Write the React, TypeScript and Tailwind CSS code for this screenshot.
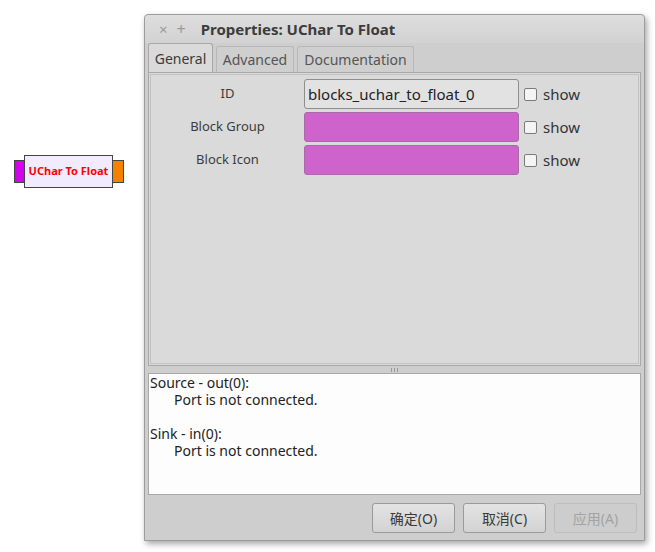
import React from 'react'

const ui = { fontFamily: '"Noto Sans", "Noto Sans CJK SC", sans-serif' }

const rows = [
  { label: 'ID', value: 'blocks_uchar_to_float_0', color: '' },
  { label: 'Block Group', value: '', color: 'magenta' },
  { label: 'Block Icon', value: '', color: 'magenta' },
]

function Row({ label, value, color }: { label: string; value: string; color: string }) {
  return (
    <div className="flex items-center h-[30px]">
      <div className="w-[153px] text-center text-[13px] text-[#3c3c3c]">{label}</div>
      <div
        className={`w-[215px] h-[30px] rounded-[3px] border flex items-center px-[3px] text-[15px] text-[#222] ${
          color ? 'bg-[#cd63cb] border-[#a86aa6]' : 'bg-[#e2e2e2] border-[#8e8e8e]'
        }`}
      >
        {value}
      </div>
      <div className="ml-[5px] w-[13px] h-[13px] rounded-[2px] border border-[#7a7a7a] bg-[#f4f4f4]" />
      <span className="ml-[6px] text-[15px] text-[#333]">show</span>
    </div>
  )
}

function Btn({ children, disabled }: { children: React.ReactNode; disabled?: boolean }) {
  return (
    <div
      className={`w-[83px] h-[30px] rounded-[3px] border flex items-center justify-center text-[14px] ${
        disabled
          ? 'border-[#bdbdbd] bg-[#cdcdcd] text-[#a3a3a3]'
          : 'border-[#9a9a9a] bg-gradient-to-b from-[#e3e3e3] to-[#d3d3d3] text-[#3a3a3a]'
      }`}
    >
      {children}
    </div>
  )
}

export default function App() {
  return (
    <div className="relative w-[655px] h-[552px] bg-white overflow-hidden" style={ui}>
      {/* block on the canvas */}
      <div className="absolute left-[14px] top-[155px] flex items-center">
        <div className="w-[11px] h-[23px] bg-[#d400f0] border border-[#444] -mr-px" />
        <div className="w-[89px] h-[33px] bg-[#f1ecfd] border border-[#444] flex items-center justify-center text-[11px] font-bold text-[#f00]">
          UChar To Float
        </div>
        <div className="w-[12px] h-[23px] bg-[#f58100] border border-[#444] -ml-px" />
      </div>

      {/* properties window */}
      <div className="absolute left-[144px] top-[14px] w-[501px] h-[527px] rounded-t-[4px] border border-[#9c9c9c] bg-[#cecece] shadow-[2px_3px_6px_rgba(0,0,0,0.35)] flex flex-col">
        <div className="h-[28px] flex items-center rounded-t-[4px] bg-gradient-to-b from-[#dedede] to-[#d2d2d2] text-[#9a9a9a]">
          <span className="ml-[14px] text-[15px] leading-none">×</span>
          <span className="ml-[9px] text-[16px] leading-none">+</span>
          <span className="ml-[15px] text-[15px] font-bold text-[#3c3c3c]">Properties: UChar To Float</span>
        </div>

        <div className="flex items-end h-[29px] px-[3px] gap-[3px]">
          <div className="h-[29px] w-[65px] rounded-t-[3px] border border-b-0 border-[#a8a8a8] bg-[#dadada] flex items-center justify-center text-[14px] text-[#3a3a3a]">
            General
          </div>
          <div className="h-[26px] w-[78px] rounded-t-[3px] border border-b-0 border-[#b8b8b8] bg-[#cfcfcf] flex items-center justify-center text-[14px] text-[#555]">
            Advanced
          </div>
          <div className="h-[26px] w-[117px] rounded-t-[3px] border border-b-0 border-[#b8b8b8] bg-[#cfcfcf] flex items-center justify-center text-[14px] text-[#555]">
            Documentation
          </div>
        </div>

        <div className="mx-[3px] h-[294px] border border-[#a8a8a8] bg-[#dadada] p-px">
          <div className="h-full border border-[#c2c2c2] pt-[4px] flex flex-col gap-[3px]">
            {rows.map((r) => (
              <Row key={r.label} {...r} />
            ))}
          </div>
        </div>

        <div className="h-[7px] flex items-center justify-center">
          <div className="flex gap-[2px]">
            <div className="w-px h-[4px] bg-[#999]" />
            <div className="w-px h-[4px] bg-[#999]" />
            <div className="w-px h-[4px] bg-[#999]" />
          </div>
        </div>

        <div className="mx-[3px] h-[122px] border border-[#a8a8a8] bg-[#fdfdfd] px-px text-[14px] leading-[17px] text-[#222]">
          <div>Source - out(0):</div>
          <div className="pl-[24px]">Port is not connected.</div>
          <div>&nbsp;</div>
          <div>Sink - in(0):</div>
          <div className="pl-[24px]">Port is not connected.</div>
        </div>

        <div className="flex-1 flex items-start justify-end gap-[8px] pt-[8px] pr-[7px]">
          <Btn>确定(O)</Btn>
          <Btn>取消(C)</Btn>
          <Btn disabled>应用(A)</Btn>
        </div>
      </div>
    </div>
  )
}
